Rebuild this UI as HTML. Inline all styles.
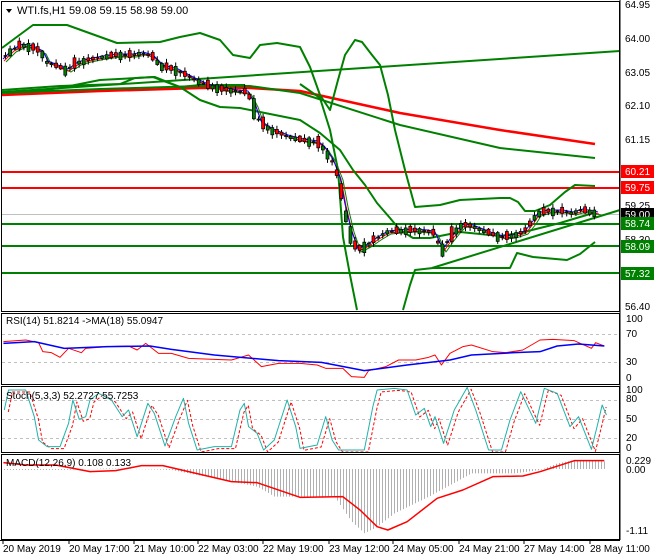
<!DOCTYPE html>
<html><head><meta charset="utf-8"><style>
html,body{margin:0;padding:0;background:#fff;}
svg{display:block;font-family:"Liberation Sans",sans-serif;font-size:10px;}
</style></head><body>
<svg id="s" width="660" height="560" xmlns="http://www.w3.org/2000/svg">
<rect width="660" height="560" fill="#fff"/>
<g id="g"></g>
<g stroke="#000" fill="none" stroke-width="1">
<rect x="1.5" y="1.5" width="618" height="310"/>
<rect x="1.5" y="313.5" width="618" height="71"/>
<rect x="1.5" y="386.5" width="618" height="66"/>
<rect x="1.5" y="454.5" width="618" height="85"/>
</g>
<g stroke="#000" stroke-width="1">
<line x1="620" y1="0" x2="620" y2="540"/>
<line x1="0" y1="540.5" x2="620" y2="540.5"/>
</g>
<path d="M6,9 L12,9 L9,13 Z" fill="#000"/>
<text x="17" y="14" font-size="11">WTI.fs,H1  59.08 59.15 58.98 59.00</text>
<g font-size="10" fill="#000">
<text x="625" y="8">64.95</text>
<text x="625" y="42">64.00</text>
<text x="625" y="76">63.05</text>
<text x="625" y="109">62.10</text>
<text x="625" y="143">61.15</text>
<text x="625" y="209">59.25</text>
<text x="625" y="243">58.30</text>
<text x="625" y="310">56.40</text>
</g>
<g font-size="10">
<rect x="621" y="165" width="33" height="13" fill="#f00"/><text x="625" y="175" fill="#fff">60.21</text>
<rect x="621" y="181" width="33" height="13" fill="#f00"/><text x="625" y="191" fill="#fff">59.75</text>
<rect x="621" y="208" width="33" height="13" fill="#000"/><text x="625" y="218" fill="#fff">59.00</text>
<rect x="621" y="217" width="33" height="13" fill="#008000"/><text x="625" y="227" fill="#fff">58.74</text>
<rect x="621" y="240" width="33" height="13" fill="#008000"/><text x="625" y="250" fill="#fff">58.09</text>
<rect x="621" y="267" width="33" height="13" fill="#008000"/><text x="625" y="277" fill="#fff">57.32</text>
</g>
<g font-size="10" fill="#000">
<text x="6" y="324">RSI(14) 51.8214  -&gt;MA(18) 55.0947</text>
<text x="626" y="322">100</text><text x="626" y="337">70</text><text x="626" y="365">30</text><text x="626" y="381">0</text>
<text x="6" y="399">Stoch(5,3,3) 52.2727 55.7253</text>
<text x="626" y="393">100</text><text x="626" y="402">80</text><text x="626" y="422">50</text><text x="626" y="441">20</text><text x="626" y="451">0</text>
<text x="6" y="466">MACD(12,26,9) 0.108 0.133</text>
<text x="626" y="464">0.229</text><text x="626" y="473">0.00</text><text x="626" y="534">-1.11</text>
</g>
<g font-size="10" fill="#000">
<text x="3" y="552">20 May 2019</text>
<text x="69" y="552">20 May 17:00</text>
<text x="134" y="552">21 May 10:00</text>
<text x="198" y="552">22 May 03:00</text>
<text x="263" y="552">22 May 19:00</text>
<text x="329" y="552">23 May 12:00</text>
<text x="393" y="552">24 May 05:00</text>
<text x="459" y="552">24 May 21:00</text>
<text x="524" y="552">27 May 14:00</text>
<text x="590" y="552">28 May 11:00</text>
</g>
</svg>
<script>
(function(){
var g=document.getElementById('g'),NS='http://www.w3.org/2000/svg';
function el(t,a){var e=document.createElementNS(NS,t);for(var k in a)e.setAttribute(k,a[k]);g.appendChild(e);return e;}
function pl(pts,c,w,extra){var a={points:pts.map(function(p){return p[0]+','+p[1]}).join(' '),fill:'none',stroke:c,'stroke-width':w,'stroke-linejoin':'round'};if(extra)for(var k in extra)a[k]=extra[k];el('polyline',a);}
function z(arr){var o=[];for(var i=0;i<arr.length;i+=2)o.push([arr[i],arr[i+1]]);return o;}
function z3(arr){var o=[];for(var i=0;i<arr.length;i+=2)o.push([arr[i]*660/1540,300+arr[i+1]/3]);return o;}
function interp(L,x){var i=0;while(i<L.length-2&&L[i+1][0]<x)i++;var a=L[i],b=L[i+1],t=(x-a[0])/((b[0]-a[0])||1);return a[1]+(b[1]-a[1])*t;}
pl([[2,214.5],[620,214.5]],'#c0c0c0',1);
pl([[2,172],[620,172]],'#f00',2);
pl([[2,188],[620,188]],'#f00',2);
pl([[2,224],[620,224]],'#008000',2);
pl([[2,246],[620,246]],'#008000',2);
pl([[2,273],[620,273]],'#008000',2);
pl([[2,92],[620,51]],'#008000',2);
pl(z([2,95,100,91,200,88,250,88,300,91,400,113,500,130,595,144]),'#f00',2.5);
pl(z([2,93,100,89,200,86,250,86,300,93,400,125,500,148,595,158]),'#008000',2);
pl(z([2,90,60,86,120,84,135,78,155,77,180,87,200,85,245,85]),'#008000',2);
pl(z([2,48,10,42,33,25,67,25,117,43,160,42,180,37,200,33,220,40,233,55,250,58,260,45,277,43,300,47,310,67,320,95,330,110,338,80,345,55,355,40,362,42,372,55,380,65,388,95,395,130,405,170,415,207,440,205,460,200,500,198,510,198,518,202,525,211,535,211,550,205,565,192,575,185,595,186]),'#008000',2);
pl(z([2,92,30,92,60,88,100,80,137,78,153,77,180,87,200,100,220,107,240,108,260,112,285,117,300,120,320,133,340,150,353,170,365,185,377,203,390,218,400,230,413,238,430,238,440,236,460,232,500,236,520,233,540,228,560,223,590,214,595,212]),'#008000',2);
pl(z([300,84,320,98,330,130,338,170,343,237,350,275,357,310]),'#008000',2);
pl(z([403,310,410,285,415,270,433,268,510,268,517,253,533,257,567,260,580,254,595,242]),'#008000',2);
pl([[432,268],[620,210]],'#008000',2);
var px=[0,60,10,50,20,45,30,47,40,52,45,62,55,66,65,70,75,63,85,60,100,57,115,55,130,55,140,53,150,56,160,66,175,70,190,78,205,85,220,89,235,91,245,92,252,105,258,122,270,130,285,136,300,140,315,142,322,148,330,160,337,178,342,205,348,230,355,250,365,245,375,238,385,232,395,231,410,230,425,231,432,233,440,250,447,240,455,230,460,225,470,226,480,230,490,234,500,237,510,236,522,232,530,222,535,214,545,211,560,211,570,213,580,210,590,212,595,213];
var P=z(px);
function off(p,dx,dy){return p.map(function(q){return [q[0]+dx,q[1]+dy]});}
pl(off(P,6,2),'#008000',1);
pl(off(P,4,1),'#f00',1);
pl(off(P,3,-1),'#00f',1);
for(var x=4;x<596;x+=4.6){
  var y=interp(P,x);
  var slope=Math.abs(interp(P,x+5)-y);
  var r=(Math.sin(x*1.7)*3+Math.cos(x*0.9)*2)*(1+slope*0.15);
  var o=y+r,c=y-r*0.6,tp=Math.min(o,c)-1-Math.abs(Math.sin(x))*3,bt=Math.max(o,c)+1+Math.abs(Math.cos(x*1.3))*3;
  el('line',{x1:x+1.5,y1:tp,x2:x+1.5,y2:bt,stroke:'#000','stroke-width':1});
  var h=Math.max(Math.abs(o-c),1);
  el('rect',{x:x,y:Math.min(o,c),width:3,height:h,fill:(o>c?'#008000':'#f00'),stroke:'#000','stroke-width':0.7});
}
pl([[2,334.5],[620,334.5]],'#c0c0c0',1,{'stroke-dasharray':'3,3'});
pl([[2,362.5],[620,362.5]],'#c0c0c0',1,{'stroke-dasharray':'3,3'});
pl(z3([8,125,60,120,90,128,100,155,120,158,140,172,160,145,190,158,200,145,250,140,300,138,320,150,340,130,370,160,400,160,440,175,500,178,540,180,580,165,610,200,650,190,700,190,740,195,760,205,800,205,820,230,850,232,860,212,900,200,930,180,970,180,1000,172,1015,165,1030,195,1050,160,1080,140,1100,135,1150,155,1180,158,1220,150,1260,120,1290,118,1340,122,1380,145,1390,128,1410,138]),'#f00',1);
pl(z3([8,130,80,125,150,145,250,140,350,138,400,148,500,165,650,182,750,187,850,212,950,195,1050,180,1100,165,1200,158,1260,155,1300,138,1350,132,1410,138]),'#00f',1.5);
[400.5,419.5,438.5].forEach(function(y){pl([[2,y],[620,y]],'#c0c0c0',1,{'stroke-dasharray':'3,3'});});
var st=[10,330,20,270,60,270,80,350,90,420,110,440,140,440,160,370,170,300,185,358,200,350,210,300,230,280,260,300,285,350,300,330,320,410,345,310,360,340,385,438,410,350,428,295,440,370,460,450,500,440,540,440,560,330,570,310,580,380,600,400,615,450,640,420,670,300,690,380,700,445,740,435,760,350,775,420,790,450,850,450,870,320,880,270,920,265,950,270,970,345,990,325,1005,380,1015,350,1035,430,1060,330,1090,262,1110,330,1140,450,1170,450,1190,360,1215,275,1250,370,1270,265,1300,280,1330,380,1350,350,1380,448,1395,370,1405,315,1415,345];
var S=z3(st).map(function(p){return [p[0],Math.min(p[1],451)]});
pl(off(S,4,2).filter(function(p){return p[0]<608}),'#f00',1,{'stroke-dasharray':'3,2'});
pl(S,'#20b2aa',1);
var hb=z3([8,510,150,510,250,505,400,510,500,535,600,560,640,590,780,590,820,665,850,700,880,680,920,640,1000,590,1100,520,1200,520,1260,510,1300,490,1340,480,1415,485]);
for(var x2=4;x2<605;x2+=3){
  var yy=interp(hb,x2);
  el('line',{x1:x2+.5,y1:469,x2:x2+.5,y2:yy,stroke:'#b0b0b0','stroke-width':1});
}
pl(z3([8,488,60,495,130,495,210,515,270,512,330,497,380,497,440,515,540,545,600,548,700,592,800,590,840,630,880,680,905,690,950,665,1020,595,1080,570,1150,530,1220,528,1260,515,1340,482,1410,482]),'#f00',1.5);
[3,69,134,198,263,329,393,459,524,590].forEach(function(tx){el('line',{x1:tx,y1:540,x2:tx,y2:544,stroke:'#000'});});
})();
</script>
</body></html>
